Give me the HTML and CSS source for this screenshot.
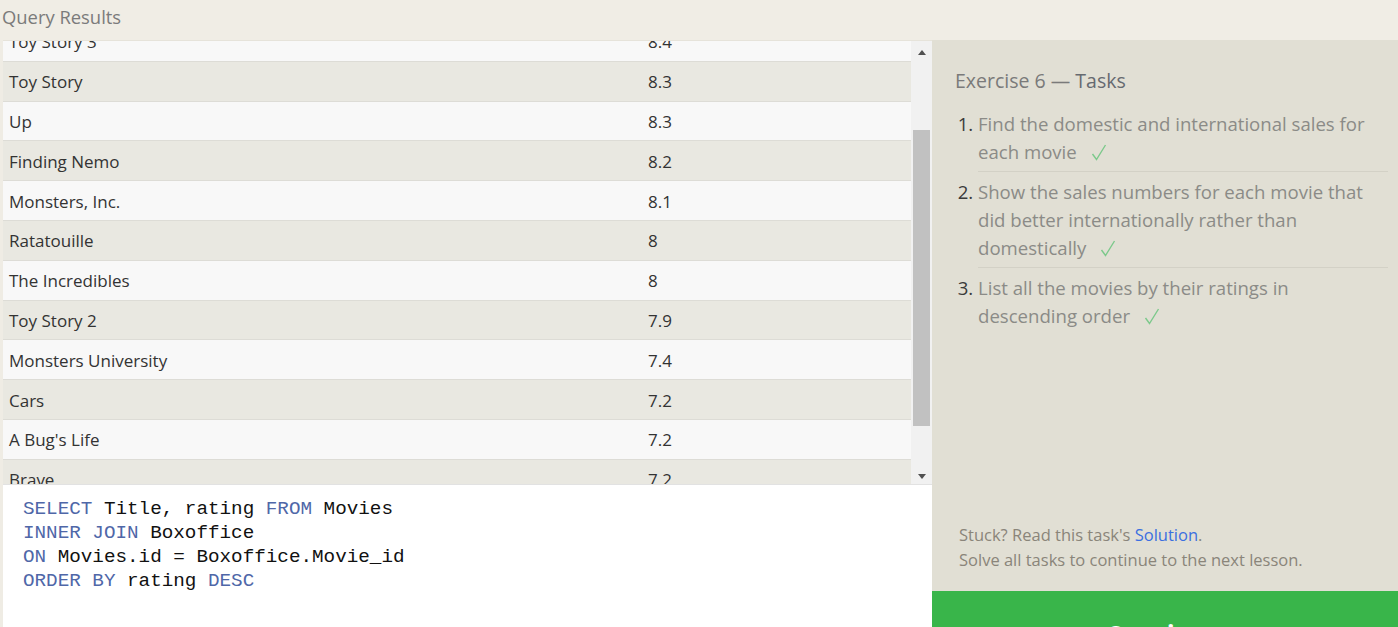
FILE: index.html
```html
<!DOCTYPE html>
<html>
<head>
<meta charset="utf-8">
<link rel="stylesheet" href="styles.css">
</head>
<body>
<div class="app">
  <header class="topbar">Query Results</header>
  <div class="main">
    <section class="results-pane">
      <div class="results">
        <div class="viewport">
          <div class="rows">
            <div class="row light"><span class="c-title">Toy Story 3</span><span class="c-rating">8.4</span></div>
            <div class="row dark"><span class="c-title">Toy Story</span><span class="c-rating">8.3</span></div>
            <div class="row light"><span class="c-title">Up</span><span class="c-rating">8.3</span></div>
            <div class="row dark"><span class="c-title">Finding Nemo</span><span class="c-rating">8.2</span></div>
            <div class="row light"><span class="c-title">Monsters, Inc.</span><span class="c-rating">8.1</span></div>
            <div class="row dark"><span class="c-title">Ratatouille</span><span class="c-rating">8</span></div>
            <div class="row light"><span class="c-title">The Incredibles</span><span class="c-rating">8</span></div>
            <div class="row dark"><span class="c-title">Toy Story 2</span><span class="c-rating">7.9</span></div>
            <div class="row light"><span class="c-title">Monsters University</span><span class="c-rating">7.4</span></div>
            <div class="row dark"><span class="c-title">Cars</span><span class="c-rating">7.2</span></div>
            <div class="row light"><span class="c-title">A Bug's Life</span><span class="c-rating">7.2</span></div>
            <div class="row dark"><span class="c-title">Brave</span><span class="c-rating">7.2</span></div>
            <div class="row light"><span class="c-title">WALL-E</span><span class="c-rating">8.4</span></div>
          </div>
        </div>
        <div class="scrollbar">
          <div class="sb-btn"><span class="arrow-up"></span></div>
          <div class="sb-track"><div class="sb-thumb"></div></div>
          <div class="sb-btn"><span class="arrow-down"></span></div>
        </div>
      </div>
      <div class="editor">
<pre class="code"><span class="kw">SELECT</span> Title, rating <span class="kw">FROM</span> Movies
<span class="kw">INNER JOIN</span> Boxoffice
<span class="kw">ON</span> Movies.id = Boxoffice.Movie_id
<span class="kw">ORDER BY</span> rating <span class="kw">DESC</span></pre>
      </div>
    </section>
    <aside class="tasks-pane">
      <div class="tasks">
        <h2 class="tasks-title">Exercise 6 — <span class="dark-word">Tasks</span></h2>
        <ol class="task-list">
          <li class="task"><span class="task-text">Find the domestic and international sales for each movie<svg class="check" width="16" height="17" viewBox="0 0 16 17"><polyline points="1.5,10 5.5,15.5 14.5,1" fill="none" stroke="#7cc98b" stroke-width="1.4"/></svg></span></li>
          <li class="task"><span class="task-text">Show the sales numbers for each movie that did better internationally rather than domestically<svg class="check" width="16" height="17" viewBox="0 0 16 17"><polyline points="1.5,10 5.5,15.5 14.5,1" fill="none" stroke="#7cc98b" stroke-width="1.4"/></svg></span></li>
          <li class="task"><span class="task-text">List all the movies by their ratings in descending order<svg class="check" width="16" height="17" viewBox="0 0 16 17"><polyline points="1.5,10 5.5,15.5 14.5,1" fill="none" stroke="#7cc98b" stroke-width="1.4"/></svg></span></li>
        </ol>
      </div>
      <div class="hint">
        <p>Stuck? Read this task's <a class="link">Solution</a>.</p>
        <p>Solve all tasks to continue to the next lesson.</p>
      </div>
      <div class="continue">Continue</div>
    </aside>
  </div>
</div>
</body>
</html>
```
FILE: styles.css
```css
* { box-sizing: border-box; }
html, body { margin: 0; padding: 0; }
body {
  font-family: "Open Sans", "Liberation Sans", sans-serif;
  width: 1398px;
  height: 627px;
  overflow: hidden;
  background: #efece4;
}
.app {
  display: grid;
  grid-template-rows: 40px 587px;
  height: 627px;
}
.topbar {
  background: #f0ede5;
  color: #7b7b7b;
  font-size: 18.4px;
  line-height: 34px;
  padding-left: 2px;
}
.main {
  display: flex;
  min-height: 0;
}
.results-pane {
  width: 932px;
  display: flex;
  flex-direction: column;
  border-left: 3px solid #efece4;
  background: #fff;
}
.results {
  height: 445px;
  display: flex;
  border-top: 1px solid #e6e3da;
  border-bottom: 1px solid #e2e2e2;
}
.viewport {
  flex: 1;
  overflow: hidden;
}
.rows {
  margin-top: -19px;
}
.row {
  height: 39.8px;
  display: flex;
  align-items: center;
  border-bottom: 1px solid #dddcd6;
  font-size: 17px;
  color: #333;
  padding-top: 1px;
}
.row.light { background: #f8f8f8; }
.row.dark { background: #e9e8e1; }
.c-title {
  width: 645px;
  padding-left: 6px;
}
.c-rating { flex: 1; }
.scrollbar {
  width: 21px;
  background: #f1f1f1;
  display: flex;
  flex-direction: column;
}
.sb-btn {
  height: 20px;
  display: flex;
  align-items: center;
  justify-content: center;
}
.arrow-up {
  width: 0; height: 0;
  border-left: 4.5px solid transparent;
  border-right: 4.5px solid transparent;
  border-bottom: 5px solid #505050;
  margin-top: 2px;
}
.arrow-down {
  width: 0; height: 0;
  border-left: 4.5px solid transparent;
  border-right: 4.5px solid transparent;
  border-top: 5px solid #505050;
  margin-top: 4px;
}
.sb-track {
  flex: 1;
  padding: 0 2px;
}
.sb-thumb {
  margin-top: 69px;
  height: 296px;
  background: #c1c1c1;
}
.editor {
  flex: 1;
  background: #fff;
  padding: 12px 0 0 20px;
}
.code {
  margin: 0;
  font-family: "Liberation Mono", "DejaVu Sans Mono", monospace;
  font-size: 19.27px;
  line-height: 24px;
  color: #111;
}
.kw { color: #4f67a8; }
.tasks-pane {
  flex: 1;
  background: #e1dfd4;
  display: flex;
  flex-direction: column;
}
.tasks {
  flex: 1;
  padding: 24px 10px 0 23px;
}
.tasks-title {
  margin: 0 0 12px;
  font-weight: normal;
  font-size: 19.5px;
  color: #7a7a7a;
  line-height: 34px;
}
.dark-word { color: #666a70; }
.task-list {
  margin: 0;
  padding: 0 0 0 23px;
  color: #3a3a3a;
  font-size: 18.6px;
  line-height: 28px;
}
.task {
  padding-left: 0;
  padding-bottom: 5px;
  margin-bottom: 6px;
  border-bottom: 1px solid #d3d1c6;
}
.task:last-child { border-bottom: none; }
.task::marker { color: #3a3a3a; }
.task-text { color: #8b8b87; }
.check {
  margin-left: 14px;
  vertical-align: -2px;
}
.hint {
  padding: 0 0 19px 27px;
  font-size: 16.5px;
  line-height: 25px;
  color: #8a857a;
}
.hint p { margin: 0; }
.link { color: #3b6fe0; }
.continue {
  height: 36px;
  background: #39b54a;
  color: #fff;
  font-weight: bold;
  font-size: 26px;
  text-align: center;
  padding-top: 26px;
  line-height: 36px;
  overflow: hidden;
}
```
